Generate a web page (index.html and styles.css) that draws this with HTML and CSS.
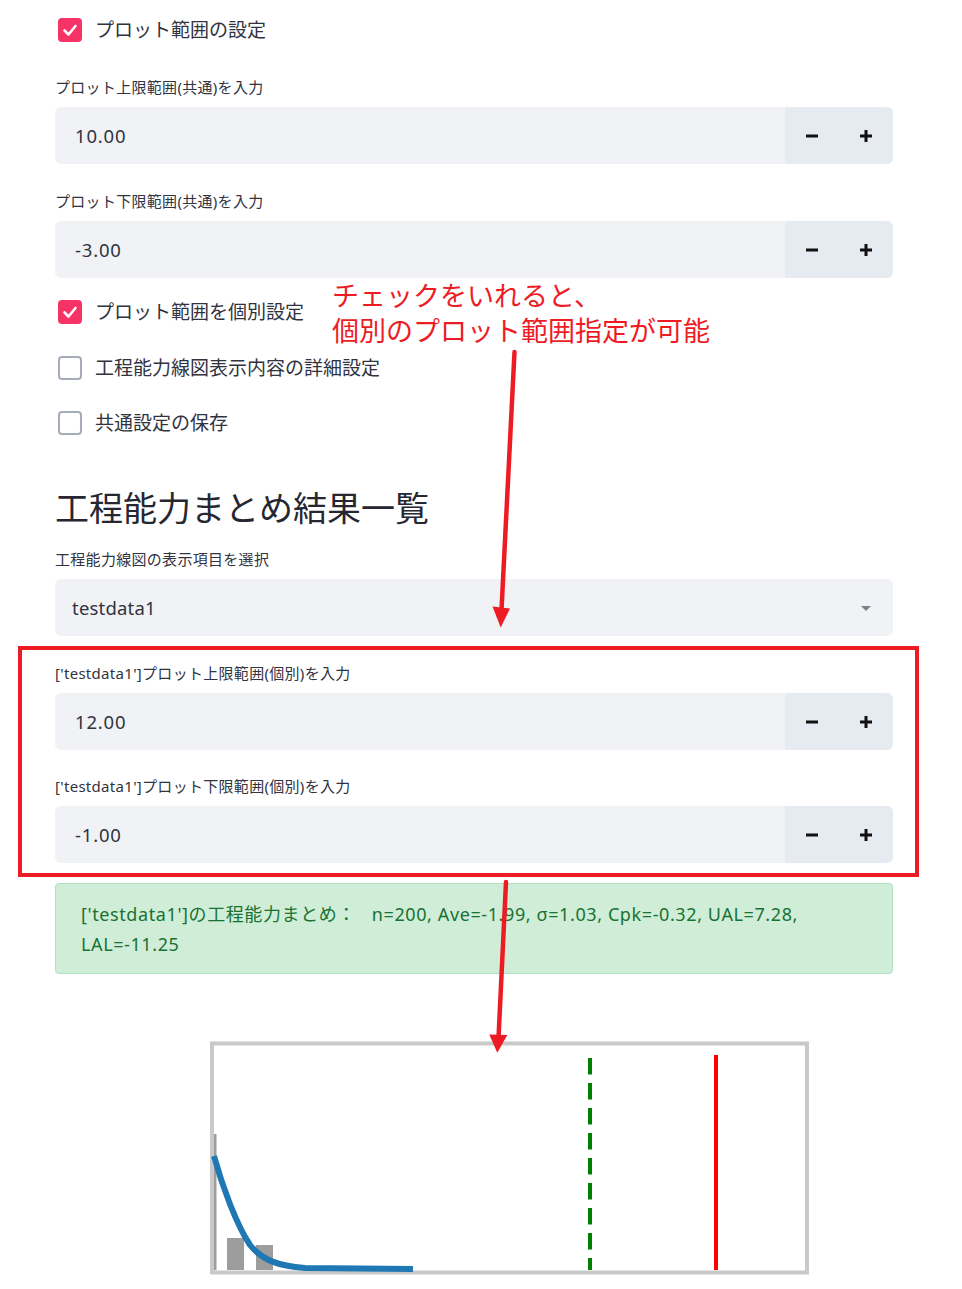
FILE: index.html
```html
<!DOCTYPE html>
<html lang="ja">
<head>
<meta charset="utf-8">
<title>工程能力まとめ</title>
<link rel="stylesheet" href="styles.css">
</head>
<body>
<main class="page">
  <div class="cb cb-first">
    <span class="box box-on"><svg viewBox="0 0 24 24" width="24" height="24"><polyline points="6.5,12.5 10.5,16.5 17.5,8" fill="none" stroke="#fff" stroke-width="2.6" stroke-linecap="round" stroke-linejoin="round"/></svg></span>
    <span class="cb-text">プロット範囲の設定</span>
  </div>

  <div class="field f-first">
    <div class="flabel">プロット上限範囲(共通)を入力</div>
    <div class="num">
      <div class="num-val">10.00</div>
      <div class="step"><svg viewBox="0 0 12 12" width="12" height="12"><rect x="0" y="4.5" width="12" height="3" fill="#111"/></svg></div>
      <div class="step"><svg viewBox="0 0 12 12" width="12" height="12"><rect x="0" y="4.5" width="12" height="3" fill="#111"/><rect x="4.5" y="0" width="3" height="12" fill="#111"/></svg></div>
    </div>
  </div>

  <div class="field f-gap">
    <div class="flabel">プロット下限範囲(共通)を入力</div>
    <div class="num">
      <div class="num-val">-3.00</div>
      <div class="step"><svg viewBox="0 0 12 12" width="12" height="12"><rect x="0" y="4.5" width="12" height="3" fill="#111"/></svg></div>
      <div class="step"><svg viewBox="0 0 12 12" width="12" height="12"><rect x="0" y="4.5" width="12" height="3" fill="#111"/><rect x="4.5" y="0" width="3" height="12" fill="#111"/></svg></div>
    </div>
  </div>

  <div class="cb cb-after">
    <span class="box box-on"><svg viewBox="0 0 24 24" width="24" height="24"><polyline points="6.5,12.5 10.5,16.5 17.5,8" fill="none" stroke="#fff" stroke-width="2.6" stroke-linecap="round" stroke-linejoin="round"/></svg></span>
    <span class="cb-text">プロット範囲を個別設定</span>
  </div>
  <div class="cb cb-next">
    <span class="box box-off"></span>
    <span class="cb-text">工程能力線図表示内容の詳細設定</span>
  </div>
  <div class="cb cb-next">
    <span class="box box-off"></span>
    <span class="cb-text">共通設定の保存</span>
  </div>

  <h2 class="heading">工程能力まとめ結果一覧</h2>

  <div class="field f-head">
    <div class="flabel">工程能力線図の表示項目を選択</div>
    <div class="select">
      <span class="select-val">testdata1</span>
      <svg class="caret" viewBox="0 0 10 5" width="10" height="5"><polygon points="0,0 10,0 5,5" fill="#7c808c"/></svg>
    </div>
  </div>

  <div class="field f-ind">
    <div class="flabel">['testdata1']プロット上限範囲(個別)を入力</div>
    <div class="num">
      <div class="num-val">12.00</div>
      <div class="step"><svg viewBox="0 0 12 12" width="12" height="12"><rect x="0" y="4.5" width="12" height="3" fill="#111"/></svg></div>
      <div class="step"><svg viewBox="0 0 12 12" width="12" height="12"><rect x="0" y="4.5" width="12" height="3" fill="#111"/><rect x="4.5" y="0" width="3" height="12" fill="#111"/></svg></div>
    </div>
  </div>

  <div class="field f-ind2">
    <div class="flabel">['testdata1']プロット下限範囲(個別)を入力</div>
    <div class="num">
      <div class="num-val">-1.00</div>
      <div class="step"><svg viewBox="0 0 12 12" width="12" height="12"><rect x="0" y="4.5" width="12" height="3" fill="#111"/></svg></div>
      <div class="step"><svg viewBox="0 0 12 12" width="12" height="12"><rect x="0" y="4.5" width="12" height="3" fill="#111"/><rect x="4.5" y="0" width="3" height="12" fill="#111"/></svg></div>
    </div>
  </div>

  <p class="success">['testdata1']の工程能力まとめ：&nbsp;&nbsp; n=200, Ave=-1.99, σ=1.03, Cpk=-0.32, UAL=7.28, LAL=-11.25</p>

  <div class="chart">
    <svg viewBox="205 1037 610 252" width="610" height="252">
      <rect x="212" y="1043.5" width="595" height="229" fill="#fff" stroke="#c9c9c9" stroke-width="4"/>
      <rect x="214" y="1134" width="2.5" height="136" fill="#9d9d9d"/>
      <rect x="227" y="1238" width="17" height="32" fill="#9d9d9d"/>
      <rect x="256" y="1245" width="17" height="25" fill="#9d9d9d"/>
      <path d="M214,1156 C222,1185 236,1224 250,1245 C262,1260 278,1266 305,1268 L413,1269" fill="none" stroke="#1f77b4" stroke-width="6"/>
      <line x1="590" y1="1058" x2="590" y2="1270" stroke="#008000" stroke-width="4" stroke-dasharray="16.5 8.5"/>
      <line x1="716" y1="1055" x2="716" y2="1270" stroke="#ff0000" stroke-width="4"/>
    </svg>
  </div>
</main>

<div class="note">チェックをいれると、<br>個別のプロット範囲指定が可能</div>
<div class="redbox"></div>
<svg class="arrows" viewBox="0 0 962 1289" width="962" height="1289">
  <line x1="514.5" y1="352" x2="501.5" y2="610" stroke="#ed1c24" stroke-width="4.5" stroke-linecap="round"/>
  <polygon points="492.5,606.5 510,608.5 500.7,627.5" fill="#ed1c24"/>
  <line x1="506" y1="882" x2="498.5" y2="1038" stroke="#ed1c24" stroke-width="4.5" stroke-linecap="round"/>
  <polygon points="489.3,1034.5 507.3,1035 497.3,1052.7" fill="#ed1c24"/>
</svg>
</body>
</html>
```

FILE: styles.css
```css
html, body {
  margin: 0;
  padding: 0;
  background: #ffffff;
}
body {
  position: relative;
  width: 962px;
  height: 1289px;
  overflow: hidden;
  font-family: "Noto Sans", "Noto Sans CJK JP", sans-serif;
  color: #31333f;
}
.page {
  padding: 0 69px 0 55px;
  display: flex;
  flex-direction: column;
}

/* checkboxes */
.cb {
  display: flex;
  align-items: center;
  align-self: flex-start;
  gap: 13px;
  height: 24px;
  padding-left: 3px;
}
.cb-first { margin-top: 18px; }
.cb-after { margin-top: 22px; }
.cb-next { margin-top: 31.5px; }
.box {
  width: 24px;
  height: 24px;
  box-sizing: border-box;
  border-radius: 4px;
  flex: none;
  display: flex;
}
.box-on { background: #f63366; }
.box-off { border: 2px solid #a6abb9; background: #fff; }
.cb-text {
  font-size: 19px;
  line-height: 24px;
  color: #31333f;
}

/* fields */
.field { display: flex; flex-direction: column; }
.f-first { margin-top: 35px; }
.f-gap { margin-top: 27px; }
.f-head { margin-top: 19px; }
.f-ind { margin-top: 27px; }
.f-ind2 { margin-top: 26px; }
.flabel {
  align-self: flex-start;
  font-size: 15px;
  line-height: 20px;
  letter-spacing: 0.3px;
  margin-bottom: 10px;
  color: #31333f;
}
.num {
  display: flex;
  height: 57px;
  border-radius: 6px;
  overflow: hidden;
  background: #f0f2f6;
}
.num-val {
  flex: 1;
  display: flex;
  align-items: center;
  padding-left: 20px;
  font-size: 18.5px;
  letter-spacing: 0.8px;
  color: #31333f;
}
.step {
  width: 54px;
  background: #e6eaf1;
  display: flex;
  align-items: center;
  justify-content: center;
}
.select {
  display: flex;
  align-items: center;
  justify-content: space-between;
  height: 57px;
  border-radius: 6px;
  background: #f0f2f6;
  padding: 0 22px 0 17px;
}
.select-val {
  font-size: 18.5px;
  letter-spacing: 0.2px;
  color: #31333f;
}
.caret { margin-top: 1px; }

/* heading */
.heading {
  margin: 51px 0 0 0;
  align-self: flex-start;
  font-size: 34px;
  line-height: 44px;
  font-weight: 400;
  color: #262730;
}

/* success message */
.success {
  margin: 20px 0 0 0;
  height: 91px;
  box-sizing: border-box;
  padding: 15px 24px 0 25px;
  background: #d0edd7;
  border: 1px solid #b3e0c0;
  border-radius: 4px;
  color: #177233;
  font-size: 18px;
  line-height: 30px;
  letter-spacing: 0.6px;
}

/* chart */
.chart {
  margin-top: 63px;
  margin-left: 150px;
  width: 610px;
  height: 252px;
}
.chart svg { display: block; }

/* annotations */
.note {
  position: absolute;
  left: 332px;
  top: 278px;
  font-size: 27px;
  line-height: 35px;
  color: #ed1c24;
  white-space: nowrap;
}
.redbox {
  position: absolute;
  left: 18px;
  top: 646px;
  width: 901px;
  height: 231px;
  box-sizing: border-box;
  border: 4px solid #ed1c24;
}
.arrows {
  position: absolute;
  left: 0;
  top: 0;
  pointer-events: none;
}
```
